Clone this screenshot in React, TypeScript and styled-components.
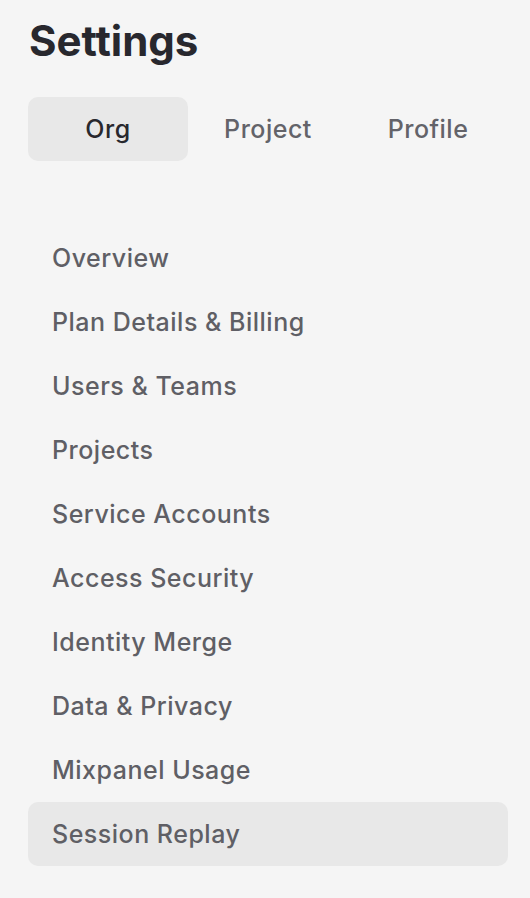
import React from "react";
import styled, { createGlobalStyle } from "styled-components";

const Global = createGlobalStyle`
  html, body { margin: 0; padding: 0; background: #f5f5f5; }
  body { font-family: Inter, "Liberation Sans", sans-serif; }
`;

const Page = styled.div`
  width: 530px;
  min-height: 898px;
  box-sizing: border-box;
  padding: 14px 22px 0 28px;
  background: #f5f5f5;
`;

const Title = styled.h1`
  margin: 0 0 0 1px;
  font-size: 42px;
  font-weight: 700;
  line-height: 54px;
  letter-spacing: 0;
  color: #28282e;
`;

const Tabs = styled.div`
  display: grid;
  grid-template-columns: repeat(3, 160px);
  margin-top: 29px;
`;

const Tab = styled.div<{ $active?: boolean }>`
  height: 64px;
  display: flex;
  align-items: center;
  justify-content: center;
  border-radius: 10px;
  font-size: 25px;
  font-weight: 500;
  letter-spacing: 0.5px;
  color: ${(p) => (p.$active ? "#28282e" : "#636369")};
  background: ${(p) => (p.$active ? "#e8e8e8" : "transparent")};
`;

const Menu = styled.nav`
  display: flex;
  flex-direction: column;
  margin-top: 65px;
  width: 480px;
`;

const Item = styled.div<{ $active?: boolean }>`
  height: 64px;
  display: flex;
  align-items: center;
  padding-left: 24px;
  border-radius: 10px;
  font-size: 25px;
  font-weight: 500;
  letter-spacing: 0.5px;
  color: #5f5f65;
  background: ${(p) => (p.$active ? "#e8e8e8" : "transparent")};
`;

const items = [
  "Overview",
  "Plan Details & Billing",
  "Users & Teams",
  "Projects",
  "Service Accounts",
  "Access Security",
  "Identity Merge",
  "Data & Privacy",
  "Mixpanel Usage",
  "Session Replay",
];

export default function App() {
  return (
    <>
      <Global />
      <Page>
        <Title>Settings</Title>
        <Tabs>
          <Tab $active>Org</Tab>
          <Tab>Project</Tab>
          <Tab>Profile</Tab>
        </Tabs>
        <Menu>
          {items.map((it) => (
            <Item key={it} $active={it === "Session Replay"}>
              {it}
            </Item>
          ))}
        </Menu>
      </Page>
    </>
  );
}
